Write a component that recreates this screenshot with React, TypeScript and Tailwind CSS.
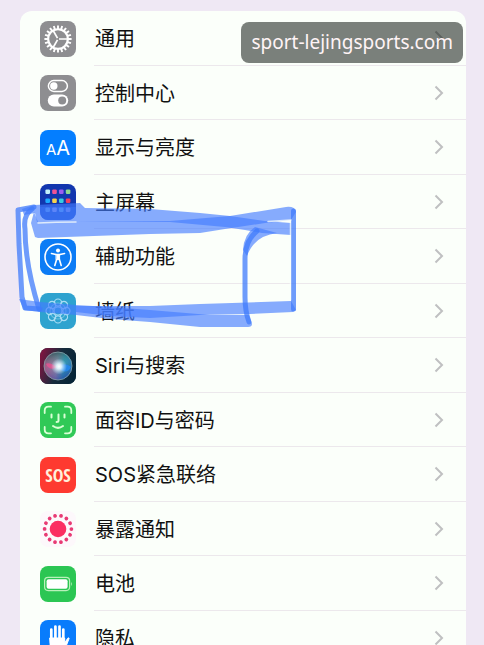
import React from 'react';
import { clsx } from 'clsx';

interface SettingItem {
  label: string;
  bg: string;
  icon: React.ReactNode;
}

const ring = (count: number) => Array.from({ length: count }, (_, i) => (i * 360) / count);

const GearIcon = () => (
  <svg viewBox="0 0 36 36" className="w-full h-full" fill="none" stroke="#fff">
    <circle cx="18" cy="18" r="9.8" strokeWidth="2.1" />
    {ring(20).map(a => (
      <path key={a} d="M18 8V4.4" strokeWidth="1.9" transform={`rotate(${a} 18 18)`} />
    ))}
    {[90, 210, 330].map(a => (
      <path key={a} d="M18 17V8.5" strokeWidth="1.7" transform={`rotate(${a} 18 18)`} />
    ))}
  </svg>
);

const TogglesIcon = () => (
  <svg viewBox="0 0 36 36" className="w-full h-full" fill="none">
    <rect x="8.4" y="5.6" width="19" height="10.8" rx="5.4" stroke="#fff" strokeWidth="1.5" />
    <circle cx="13.8" cy="11" r="3.7" fill="#fff" />
    <rect x="7.8" y="19.6" width="20.4" height="12" rx="6" fill="#fff" />
    <circle cx="22.2" cy="25.6" r="4" fill="#8e8e91" />
  </svg>
);

const TextSizeIcon = () => (
  <span className="flex items-baseline justify-center text-white leading-none font-['Inter',sans-serif]">
    <span className="text-[15px]">A</span>
    <span className="text-[20px]">A</span>
  </span>
);

const APP_DOTS = [
  ['#c4f3fa', '#ee5394', '#9b5df0', '#8fd890'],
  ['#1da9ff', '#f5d24e', '#38cde0', '#f3405e'],
  ['#5d9aec', '#8a97ea', '#5da1ec', '#7d8ae8'],
];

const HomeIcon = () => (
  <svg viewBox="0 0 36 36" className="w-full h-full">
    <rect y="23" width="36" height="13" fill="#2363e3" opacity="0.6" />
    {APP_DOTS.map((row, y) =>
      row.map((color, x) => (
        <rect key={`${x}-${y}`} x={5.4 + x * 6.8} y={5.4 + y * 9} width="4.6" height="4.6" rx="1.2" fill={color} />
      ))
    )}
  </svg>
);

const AccessibilityIcon = () => (
  <svg viewBox="0 0 36 36" className="w-full h-full" fill="none" stroke="#fff" strokeLinecap="round" strokeLinejoin="round">
    <circle cx="18" cy="18" r="13" strokeWidth="1.6" />
    <circle cx="18" cy="11.4" r="2" fill="#fff" stroke="none" />
    <path d="M11.4 14.6 16 15.6h4l4.6-1" strokeWidth="1.5" />
    <path d="M16.4 15.6h3.2v5h-3.2z" fill="#fff" strokeWidth="1" />
    <path d="m16.6 20.5-1.8 6M19.4 20.5l1.8 6" strokeWidth="1.6" />
  </svg>
);

const FlowerIcon = () => (
  <svg viewBox="0 0 36 36" className="w-full h-full" fill="none" stroke="#a9dcf4" strokeWidth="1.2">
    {ring(8).map(a => (
      <circle key={a} cx="18" cy="9.6" r="3.6" transform={`rotate(${a} 18 18)`} />
    ))}
    <circle cx="18" cy="18" r="4" />
    <circle cx="18" cy="18" r="8" opacity="0.5" />
  </svg>
);

const SiriIcon = () => (
  <svg viewBox="0 0 36 36" className="w-full h-full">
    <defs>
      <linearGradient id="siri-bg" x1="0" y1="0.3" x2="1" y2="0.6">
        <stop offset="0" stopColor="#7c1540" />
        <stop offset="0.5" stopColor="#172c3c" />
        <stop offset="1" stopColor="#052536" />
      </linearGradient>
      <linearGradient id="siri-orb" x1="0" y1="0.5" x2="1" y2="0.6">
        <stop offset="0" stopColor="#e02676" />
        <stop offset="0.45" stopColor="#b07cb0" />
        <stop offset="0.7" stopColor="#2a8fc0" />
        <stop offset="1" stopColor="#1a62c0" />
      </linearGradient>
      <linearGradient id="siri-top" x1="0.3" y1="0" x2="0.5" y2="1">
        <stop offset="0" stopColor="#245356" stopOpacity="0.9" />
        <stop offset="0.45" stopColor="#48a99a" stopOpacity="0.35" />
        <stop offset="1" stopColor="#233c99" stopOpacity="0.6" />
      </linearGradient>
      <radialGradient id="siri-core">
        <stop offset="0" stopColor="#fff" />
        <stop offset="0.3" stopColor="#e9faff" stopOpacity="0.9" />
        <stop offset="1" stopColor="#c9eaff" stopOpacity="0" />
      </radialGradient>
    </defs>
    <rect width="36" height="36" fill="url(#siri-bg)" />
    <circle cx="18" cy="18" r="14" fill="url(#siri-orb)" />
    <circle cx="18" cy="18" r="14" fill="url(#siri-top)" stroke="#84a2a7" strokeWidth="0.8" />
    <path d="M18 19c4-4 9-3 13 0-3 6-8 6-13 0z" fill="#2387ed" opacity="0.9" />
    <path d="M17 19C12 16 8 14 6 16c2 5 7 6 11 3z" fill="#f34e8e" opacity="0.7" />
    <circle cx="19" cy="18.5" r="8" fill="url(#siri-core)" />
  </svg>
);

const FaceIcon = () => (
  <svg viewBox="0 0 36 36" className="w-full h-full" fill="none" stroke="#d9ffd5" strokeWidth="1.8" strokeLinecap="round" strokeLinejoin="round">
    <path d="M4.7 11V8.5q0-3.8 3.8-3.8H11M25 4.700h2.500q3.800 0 3.800 3.800V11M31.300 25v2.500q0 3.800-3.800 3.800H25M11 31.300H8.500q-3.800 0-3.800-3.800V25" />
    <path d="M11.5 12.5v3M24.5 12.5v3M18.5 12.5v6q0 1.500-1.900 1.500M13 24q5 3.800 10 0" strokeWidth="2" />
  </svg>
);

const SosIcon = () => (
  <span className="text-[18px] leading-none font-bold text-[#fff0dc] font-['Liberation_Sans_Narrow','Open_Sans_Condensed','Roboto_Condensed','Roboto',sans-serif]">
    SOS
  </span>
);

const ExposureIcon = () => (
  <svg viewBox="0 0 36 36" className="w-full h-full" fill="#e83a74">
    <circle cx="18" cy="18" r="8.3" fill="#fb2e62" />
    {ring(14).map(a => (
      <circle key={a} cx="18" cy="4.6" r="1.9" transform={`rotate(${a + 13} 18 18)`} />
    ))}
  </svg>
);

const BatteryIcon = () => (
  <svg viewBox="0 0 36 36" className="w-full h-full" fill="none">
    <rect x="4.6" y="11.4" width="25" height="13.2" rx="3.5" stroke="#b9f1ba" strokeWidth="1.2" />
    <rect x="6.6" y="13.3" width="21" height="9.4" rx="2" fill="#fff" />
    <path d="M31.2 15.8q1.8 2.2 0 4.4z" fill="#b9f1ba" />
  </svg>
);

const HandIcon = () => (
  <svg viewBox="0 0 36 36" className="w-full h-full" fill="none" stroke="#fff" strokeLinecap="round" strokeLinejoin="round">
    <path d="M11.3 20V9.5M15.4 18V6.5M19.5 18V6.500M23.3 20V9.5" strokeWidth="2.7" />
    <path d="M10 18h14.700v5l2.800-4.500q1.200-1.500 1.600 0L25.800 27q-2.300 5.500-7.500 5.500Q10 32.500 10 24z" fill="#fff" strokeWidth="1" />
  </svg>
);

const ITEMS: SettingItem[] = [
  { label: '通用', bg: 'bg-[#8e8e91]', icon: <GearIcon /> },
  { label: '控制中心', bg: 'bg-[#8e8e91]', icon: <TogglesIcon /> },
  { label: '显示与亮度', bg: 'bg-[#047eff]', icon: <TextSizeIcon /> },
  { label: '主屏幕', bg: 'bg-[#1237ae]', icon: <HomeIcon /> },
  { label: '辅助功能', bg: 'bg-[#0c7cf5]', icon: <AccessibilityIcon /> },
  { label: '墙纸', bg: 'bg-[#2ea3cf]', icon: <FlowerIcon /> },
  { label: 'Siri与搜索', bg: 'bg-[#172c3c]', icon: <SiriIcon /> },
  { label: '面容ID与密码', bg: 'bg-[#30c957]', icon: <FaceIcon /> },
  { label: 'SOS紧急联络', bg: 'bg-[#fe3a30]', icon: <SosIcon /> },
  { label: '暴露通知', bg: 'bg-[#fdf8fb]', icon: <ExposureIcon /> },
  { label: '电池', bg: 'bg-[#2bc653]', icon: <BatteryIcon /> },
  { label: '隐私', bg: 'bg-[#087cfc]', icon: <HandIcon /> },
];

const SettingRow = ({ item, last }: { item: SettingItem; last: boolean }) => (
  <li className="odd:h-[55px] even:h-[54px]">
    <a href="#" className="flex h-full items-center pl-5">
      <span className={clsx('flex w-9 h-9 shrink-0 items-center justify-center rounded-lg overflow-hidden', item.bg)}>
        {item.icon}
      </span>
      <span className={clsx('ml-[18px] flex flex-1 h-full items-center justify-between pl-px pr-[22px]', !last && 'border-b border-[#ece8ec]')}>
        <span className="pt-[2px] text-[20px] leading-7 text-[#111]">{item.label}</span>
        <svg viewBox="0 0 10 16" className="w-[10px] h-4" fill="none" stroke="#bfc0c1" strokeWidth="2">
          <path d="M1.5 1.5 8 8l-6.5 6.5" />
        </svg>
      </span>
    </a>
  </li>
);

// Marker drawn by hand around the accessibility row
const MarkerStroke = () => (
  <svg
    viewBox="0 200 310 135"
    className="absolute left-0 top-[200px] w-[310px] h-[135px] pointer-events-none"
    fill="none"
    stroke="#3f7bfb"
    strokeOpacity="0.75"
    strokeWidth="5"
    strokeLinecap="round"
    strokeLinejoin="round"
  >
    <g fill="#437bff" fillOpacity="0.64" stroke="none">
      <path d="M22 209l12-4 46-2 5 5 65 1 50 4 30 3 35 5 26 2v12l-29-2-17-3-20-3-55-5H37l-2-9-11 2z" />
      <path d="M34 212l4 10h38l94-1 60-5 56-9q9-1 10 5l-5 8-26 3-40 6-25 4-50 1-112 4-3-1-4-14z" />
      <path d="M19 299l21 3 36 3 34 2 40 3 60 5h39l3 9q0 3-4 3h-48l-50-5-40-3-34-4-36-3-16-2z" />
      <path d="M76 306h74l50-2 91-3 5 9-3 2-43 2-50 1-50 3-40-2-34-4z" />
      <path d="M243 250q1-16 12-23l22 6q-23 3-30 23z" />
    </g>
    <path d="M34 207l-16 3 1 34 3 53 3 11 15 1" />
    <path d="M32 209q-9 6-7 20 0 35 14 80" />
    <path d="M293.500 211v98" />
    <path d="M257 231q-12 10-12 28v38q0 14 4 25" />
    <path d="M38 223q18-1 38-1M268 221.500l23-1.500M290.500 221v79" stroke="#fbfffa" strokeWidth="1.500" />
  </svg>
);

const App = () => {
  return (
    <main className="relative h-screen overflow-hidden bg-[#efe8f4] pt-[11px] pl-5 pr-[18px] font-['Inter','Noto_Sans_CJK_SC',sans-serif]">
      <ul className="rounded-t-xl bg-[#fbfffa]">
        {ITEMS.map((item, i) => (
          <SettingRow key={item.label} item={item} last={i === ITEMS.length - 1} />
        ))}
      </ul>

      <MarkerStroke />

      <div className="absolute top-[22px] right-[21px] rounded-lg bg-[#040c06]/52 px-[10px] py-[6px] text-[19px] leading-[29px] text-[#fff4f6] font-['Noto_Sans',sans-serif]">
        sport-lejingsports.com
      </div>
    </main>
  );
};

export default App;
